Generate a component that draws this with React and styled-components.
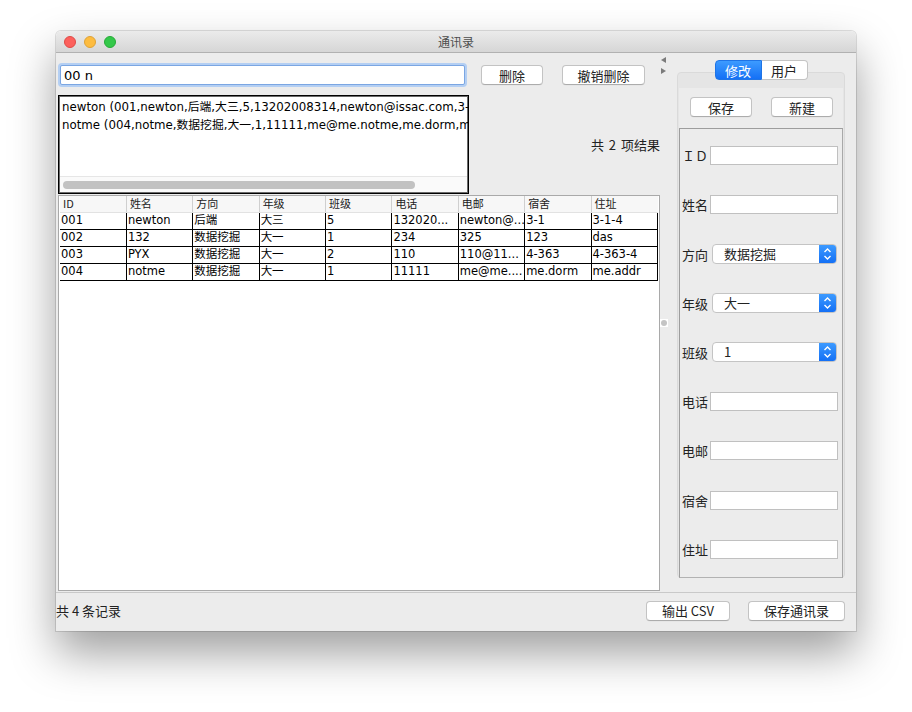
import styled, { createGlobalStyle } from "styled-components"

const Global = createGlobalStyle`
    html, body {
        margin: 0;
        background: #ffffff;
    }
    * { box-sizing: border-box; }
`

const cjk = `"Noto Sans CJK SC", "DejaVu Sans", sans-serif`
const data = `"DejaVu Sans", "Noto Sans CJK SC", sans-serif`

const columns = ["ID", "姓名", "方向", "年级", "班级", "电话", "电邮", "宿舍", "住址"]

const rows = [
    ["001", "newton", "后端", "大三", "5", "132020...", "newton@...", "3-1", "3-1-4"],
    ["002", "132", "数据挖掘", "大一", "1", "234", "325", "123", "das"],
    ["003", "PYX", "数据挖掘", "大一", "2", "110", "110@11...", "4-363", "4-363-4"],
    ["004", "notme", "数据挖掘", "大一", "1", "11111", "me@me....", "me.dorm", "me.addr"],
]

const fields = [
    { label: "ＩＤ", kind: "text" },
    { label: "姓名", kind: "text" },
    { label: "方向", kind: "select", value: "数据挖掘" },
    { label: "年级", kind: "select", value: "大一" },
    { label: "班级", kind: "select", value: "1" },
    { label: "电话", kind: "text" },
    { label: "电邮", kind: "text" },
    { label: "宿舍", kind: "text" },
    { label: "住址", kind: "text" },
]

export default function App() {
    return (
        <Page>
            <Global />
            <Window>
                <TitleBar>
                    <Lights>
                        <Light $c="#fc605c" $b="#de4a46" />
                        <Light $c="#fdbc40" $b="#dea236" />
                        <Light $c="#34c84a" $b="#27aa37" />
                    </Lights>
                    <Title>通讯录</Title>
                </TitleBar>
                <Body>
                    <Main>
                        <LeftPane>
                            <SearchRow>
                                <Search>00 n</Search>
                                <Button $w={62} $ml={16}>删除</Button>
                                <Button $w={83} $ml={19}>撤销删除</Button>
                            </SearchRow>
                            <ResultRow>
                                <ResultList>
                                    <ResultLines>
                                        <div>newton (001,newton,后端,大三,5,13202008314,newton@issac.com,3-</div>
                                        <div>notme (004,notme,数据挖掘,大一,1,11111,me@me.notme,me.dorm,m</div>
                                    </ResultLines>
                                    <HScroll>
                                        <Thumb />
                                    </HScroll>
                                </ResultList>
                                <ResultCount>共 2 项结果</ResultCount>
                            </ResultRow>
                            <TableBox>
                                <Grid>
                                    <thead>
                                        <tr>
                                            {columns.map(c => <Th key={c}>{c}</Th>)}
                                        </tr>
                                    </thead>
                                    <tbody>
                                        {rows.map(r => (
                                            <tr key={r[0]}>
                                                {r.map((v, i) => <Td key={i}>{v}</Td>)}
                                            </tr>
                                        ))}
                                    </tbody>
                                </Grid>
                            </TableBox>
                        </LeftPane>
                        <Divider>
                            <Arrows>
                                <Arrow $dir="left" />
                                <Arrow $dir="right" />
                            </Arrows>
                            <Knob />
                        </Divider>
                        <RightPane>
                            <Tabs>
                                <Tab $on>修改</Tab>
                                <Tab>用户</Tab>
                            </Tabs>
                            <TabPanel>
                                <PanelInner>
                                    <ActionRow>
                                        <Button $w={62}>保存</Button>
                                        <Button $w={62}>新建</Button>
                                    </ActionRow>
                                    <Form>
                                        {fields.map(f => (
                                            <FormRow key={f.label}>
                                                <Label>{f.label}</Label>
                                                {f.kind === "text" ? (
                                                    <Field />
                                                ) : (
                                                    <Select>
                                                        <SelectText>{f.value}</SelectText>
                                                        <SelectBtn>
                                                            <svg width="9" height="14" viewBox="0 0 9 14">
                                                                <path d="M1.5 5 L4.5 2 L7.5 5 M1.5 9 L4.5 12 L7.5 9" fill="none" stroke="#fff" strokeWidth="1.4" />
                                                            </svg>
                                                        </SelectBtn>
                                                    </Select>
                                                )}
                                            </FormRow>
                                        ))}
                                    </Form>
                                </PanelInner>
                            </TabPanel>
                        </RightPane>
                    </Main>
                    <BottomBar>
                        <Status>共 4 条记录</Status>
                        <Button $w={84} $ml={0}>输出 CSV</Button>
                        <Button $w={97} $ml={18}>保存通讯录</Button>
                    </BottomBar>
                </Body>
            </Window>
        </Page>
    )
}

const Page = styled.div`
    width: 912px;
    height: 712px;
    padding: 31px 0 0 56px;
    background: #ffffff;
`

const Window = styled.div`
    width: 800px;
    height: 600px;
    display: flex;
    flex-direction: column;
    border-radius: 5px 5px 0 0;
    overflow: hidden;
    box-shadow: 0 22px 45px rgba(0, 0, 0, 0.38), 0 0 0 1px rgba(0, 0, 0, 0.12);
`

const TitleBar = styled.div`
    position: relative;
    height: 22px;
    flex: none;
    display: flex;
    align-items: center;
    background: linear-gradient(#ebebeb, #d6d6d6);
    border-bottom: 1px solid #b1b1b1;
`

const Lights = styled.div`
    display: flex;
    gap: 8px;
    padding-left: 8px;
`

const Light = styled.span`
    width: 12px;
    height: 12px;
    border-radius: 50%;
    background: ${p => p.$c};
    border: 0.5px solid ${p => p.$b};
`

const Title = styled.div`
    position: absolute;
    left: 0;
    right: 0;
    text-align: center;
    font: 12px ${cjk};
    color: #4d4d4d;
`

const Body = styled.div`
    flex: 1;
    display: flex;
    flex-direction: column;
    background: #ececec;
`

const Main = styled.div`
    flex: 1;
    display: flex;
    min-height: 0;
`

const LeftPane = styled.div`
    width: 604px;
    display: flex;
    flex-direction: column;
    padding: 12px 0 1px 2px;
`

const SearchRow = styled.div`
    display: flex;
    align-items: center;
    padding-left: 2px;
`

const Search = styled.div`
    width: 405px;
    height: 20px;
    background: #fff;
    border: 1px solid #7ba6e2;
    box-shadow: 0 0 0 2px #b4cff3;
    border-radius: 2px;
    padding: 1px 3px 0;
    font: 13px ${data};
    line-height: 17px;
    color: #000;
`

const Button = styled.div`
    width: ${p => p.$w}px;
    margin-left: ${p => p.$ml || 0}px;
    height: 20px;
    flex: none;
    display: flex;
    align-items: center;
    justify-content: center;
    background: #fff;
    border: 1px solid #c3c3c3;
    border-bottom-color: #acacac;
    border-radius: 4px;
    box-shadow: 0 0.5px 0 rgba(0, 0, 0, 0.05);
    font: 13px ${cjk};
    line-height: 17px;
    color: #222;
`

const ResultRow = styled.div`
    display: flex;
    align-items: flex-start;
    margin-top: 10px;
`

const ResultList = styled.div`
    width: 411px;
    height: 99px;
    flex: none;
    display: flex;
    flex-direction: column;
    background: #fff;
    border: 1px solid #000;
    box-shadow: inset 0 0 0 1px #6a6a6a;
    overflow: hidden;
`

const ResultLines = styled.div`
    flex: 1;
    padding: 2px 0 0 3px;
    font: 11.8px ${data};
    line-height: 18px;
    white-space: nowrap;
    overflow: hidden;
    color: #000;
`

const HScroll = styled.div`
    height: 16px;
    margin: 0 1px 1px;
    background: #fafafa;
    border-top: 1px solid #e6e6e6;
    padding: 4px 3px 0;
`

const Thumb = styled.div`
    width: 352px;
    height: 8px;
    border-radius: 4px;
    background: #c2c2c2;
`

const ResultCount = styled.div`
    flex: 1;
    text-align: right;
    padding-top: 40px;
    font: 13px ${cjk};
    word-spacing: 2px;
    color: #222;
`

const TableBox = styled.div`
    flex: 1;
    margin-top: 1px;
    background: #fff;
    border: 1px solid #a9a9a9;
    padding: 0 0 0 1px;
`

const Grid = styled.table`
    width: 598px;
    table-layout: fixed;
    border-collapse: collapse;
`

const Th = styled.th`
    height: 16px;
    padding: 0 3px;
    text-align: left;
    font: normal 11px ${cjk};
    line-height: 15px;
    color: #222;
    background: #f7f7f7;
    border-left: 1px solid #cfcfcf;
    border-bottom: 1px solid #e2e2e2;
    &:first-child { border-left: none; }
`

const Td = styled.td`
    height: 17px;
    padding: 0 1px;
    font: 11.5px ${data};
    line-height: 15px;
    color: #000;
    white-space: nowrap;
    overflow: hidden;
    border: 1px solid #000;
    border-top: none;
    &:first-child { border-left: none; }
`

const Divider = styled.div`
    width: 7px;
    flex: none;
    display: flex;
    flex-direction: column;
    align-items: center;
    padding-top: 4px;
`

const Arrows = styled.div`
    display: flex;
    flex-direction: column;
    gap: 5px;
`

const Arrow = styled.span`
    width: 0;
    height: 0;
    border-top: 3.5px solid transparent;
    border-bottom: 3.5px solid transparent;
    ${p => p.$dir === "left"
        ? "border-right: 5px solid #7b7b7b;"
        : "border-left: 5px solid #7b7b7b;"}
`

const Knob = styled.span`
    margin-top: 245px;
    width: 8px;
    height: 8px;
    display: flex;
    align-items: center;
    justify-content: center;
    background: #fff;
    &::after {
        content: "";
        width: 6px;
        height: 6px;
        border-radius: 50%;
        background: #c4c4c4;
    }
`

const RightPane = styled.div`
    flex: 1;
    display: flex;
    flex-direction: column;
    padding: 7px 11px 14px 10px;
`

const Tabs = styled.div`
    position: relative;
    z-index: 1;
    align-self: center;
    display: flex;
`

const Tab = styled.div`
    width: ${p => (p.$on ? 47 : 46)}px;
    height: 20px;
    display: flex;
    align-items: center;
    justify-content: center;
    font: 13px ${cjk};
    color: ${p => (p.$on ? "#fff" : "#222")};
    background: ${p => (p.$on ? "linear-gradient(#3d9bff, #1470f5)" : "#fff")};
    border: 1px solid ${p => (p.$on ? "#1f74e6" : "#c4c4c4")};
    border-radius: ${p => (p.$on ? "4px 0 0 4px" : "0 4px 4px 0")};
    ${p => !p.$on && "border-left: none;"}
`

const TabPanel = styled.div`
    flex: 1;
    margin-top: -8px;
    background: #e5e5e5;
    border: 1px solid #dadada;
    border-radius: 4px;
    padding: 15px 1px 0;
    display: flex;
    flex-direction: column;
`

const PanelInner = styled.div`
    flex: 1;
    display: flex;
    flex-direction: column;
    background: #ececec;
    margin: 0 0 -1px;
`

const ActionRow = styled.div`
    display: flex;
    justify-content: space-between;
    padding: 9px 10px 0 11px;
    height: 40px;
`

const Form = styled.div`
    flex: 1;
    display: flex;
    flex-direction: column;
    padding: 2px 4px 3px 1px;
    border: 1px solid #9d9d9d;
    border-right-color: #a8a8a8;
    border-bottom-color: #b2b2b2;
`

const FormRow = styled.div`
    flex: 1;
    display: flex;
    align-items: center;
`

const Label = styled.div`
    width: 29px;
    flex: none;
    font: 13px ${cjk};
    color: #222;
    text-align: right;
    padding-right: 2px;
`

const Field = styled.div`
    flex: 1;
    height: 19px;
    background: #fff;
    border: 1px solid #c0c0c0;
`

const Select = styled.div`
    flex: 1;
    height: 20px;
    margin-left: 2px;
    margin-right: 1px;
    display: flex;
    background: #fff;
    border: 1px solid #c4c4c4;
    border-radius: 4px;
    overflow: hidden;
`

const SelectText = styled.div`
    flex: 1;
    padding-left: 11px;
    font: 13px ${cjk};
    line-height: 18px;
    color: #222;
`

const SelectBtn = styled.div`
    width: 17px;
    display: flex;
    align-items: center;
    justify-content: center;
    background: linear-gradient(#3c9aff, #1470f5);
`

const BottomBar = styled.div`
    height: 39px;
    flex: none;
    display: flex;
    align-items: center;
    padding: 0 11px 3px 0;
    border-top: 1px solid #c9c9c9;
`

const Status = styled.div`
    flex: 1;
    font: 13px ${cjk};
    color: #222;
`
